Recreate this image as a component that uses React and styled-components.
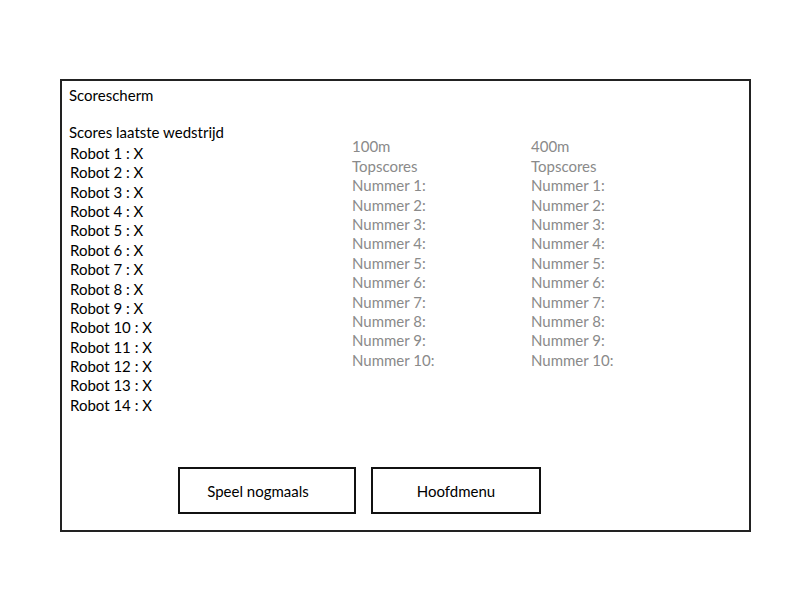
import styled, { createGlobalStyle } from 'styled-components';

const GlobalStyle = createGlobalStyle`
    html, body {
        margin: 0;
        background: #fff;
    }
    body {
        font-family: Lato, "Open Sans", sans-serif;
        font-size: 15px;
        color: #000;
    }
`;

const Page = styled.div`
    padding: 79px 0 0 60px;
`;

const Frame = styled.div`
    box-sizing: border-box;
    width: 691px;
    height: 453px;
    border: 2px solid #222;
    padding: 5px 0 16px 7px;
    display: flex;
    flex-direction: column;
`;

const Line = styled.div`
    line-height: 19.4px;
    height: 19.4px;
    white-space: nowrap;
    color: ${p => (p.$muted ? '#8a8a8a' : '#000')};
    margin-left: ${p => p.$indent || 0}px;
`;

const Body = styled.div`
    display: flex;
`;

const LeftCol = styled.div`
    width: 283px;
    padding-top: 18px;
`;

const RobotList = styled.div`
    margin-top: 1px;
`;

const ScoreCol = styled.div`
    width: 179px;
    padding-top: 32px;
`;

const ButtonRow = styled.div`
    margin-top: auto;
    display: flex;
    gap: 15px;
    padding-left: 109px;
`;

const Button = styled.button`
    box-sizing: border-box;
    width: ${p => p.$w}px;
    height: 47px;
    border: 2px solid #111;
    background: #fff;
    font-family: inherit;
    font-size: 15px;
    color: #000;
    padding: 0 ${p => p.$shift || 0}px 0 0;
`;

const robots = Array.from({ length: 14 }, (_, i) => `Robot ${i + 1} : X`);
const places = Array.from({ length: 10 }, (_, i) => `Nummer ${i + 1}:`);

function TopScores({ distance }) {
    return (
        <ScoreCol>
            <Line $muted>{distance}</Line>
            <Line $muted>Topscores</Line>
            {places.map(p => <Line $muted key={p}>{p}</Line>)}
        </ScoreCol>
    );
}

export default function App() {
    return (
        <>
            <GlobalStyle />
            <Page>
                <Frame>
                    <Line>Scorescherm</Line>
                    <Body>
                        <LeftCol>
                            <Line>Scores laatste wedstrijd</Line>
                            <RobotList>
                                {robots.map(r => <Line $indent={1} key={r}>{r}</Line>)}
                            </RobotList>
                        </LeftCol>
                        <TopScores distance="100m" />
                        <TopScores distance="400m" />
                    </Body>
                    <ButtonRow>
                        <Button $w={178} $shift={18}>Speel nogmaals</Button>
                        <Button $w={170}>Hoofdmenu</Button>
                    </ButtonRow>
                </Frame>
            </Page>
        </>
    );
}
